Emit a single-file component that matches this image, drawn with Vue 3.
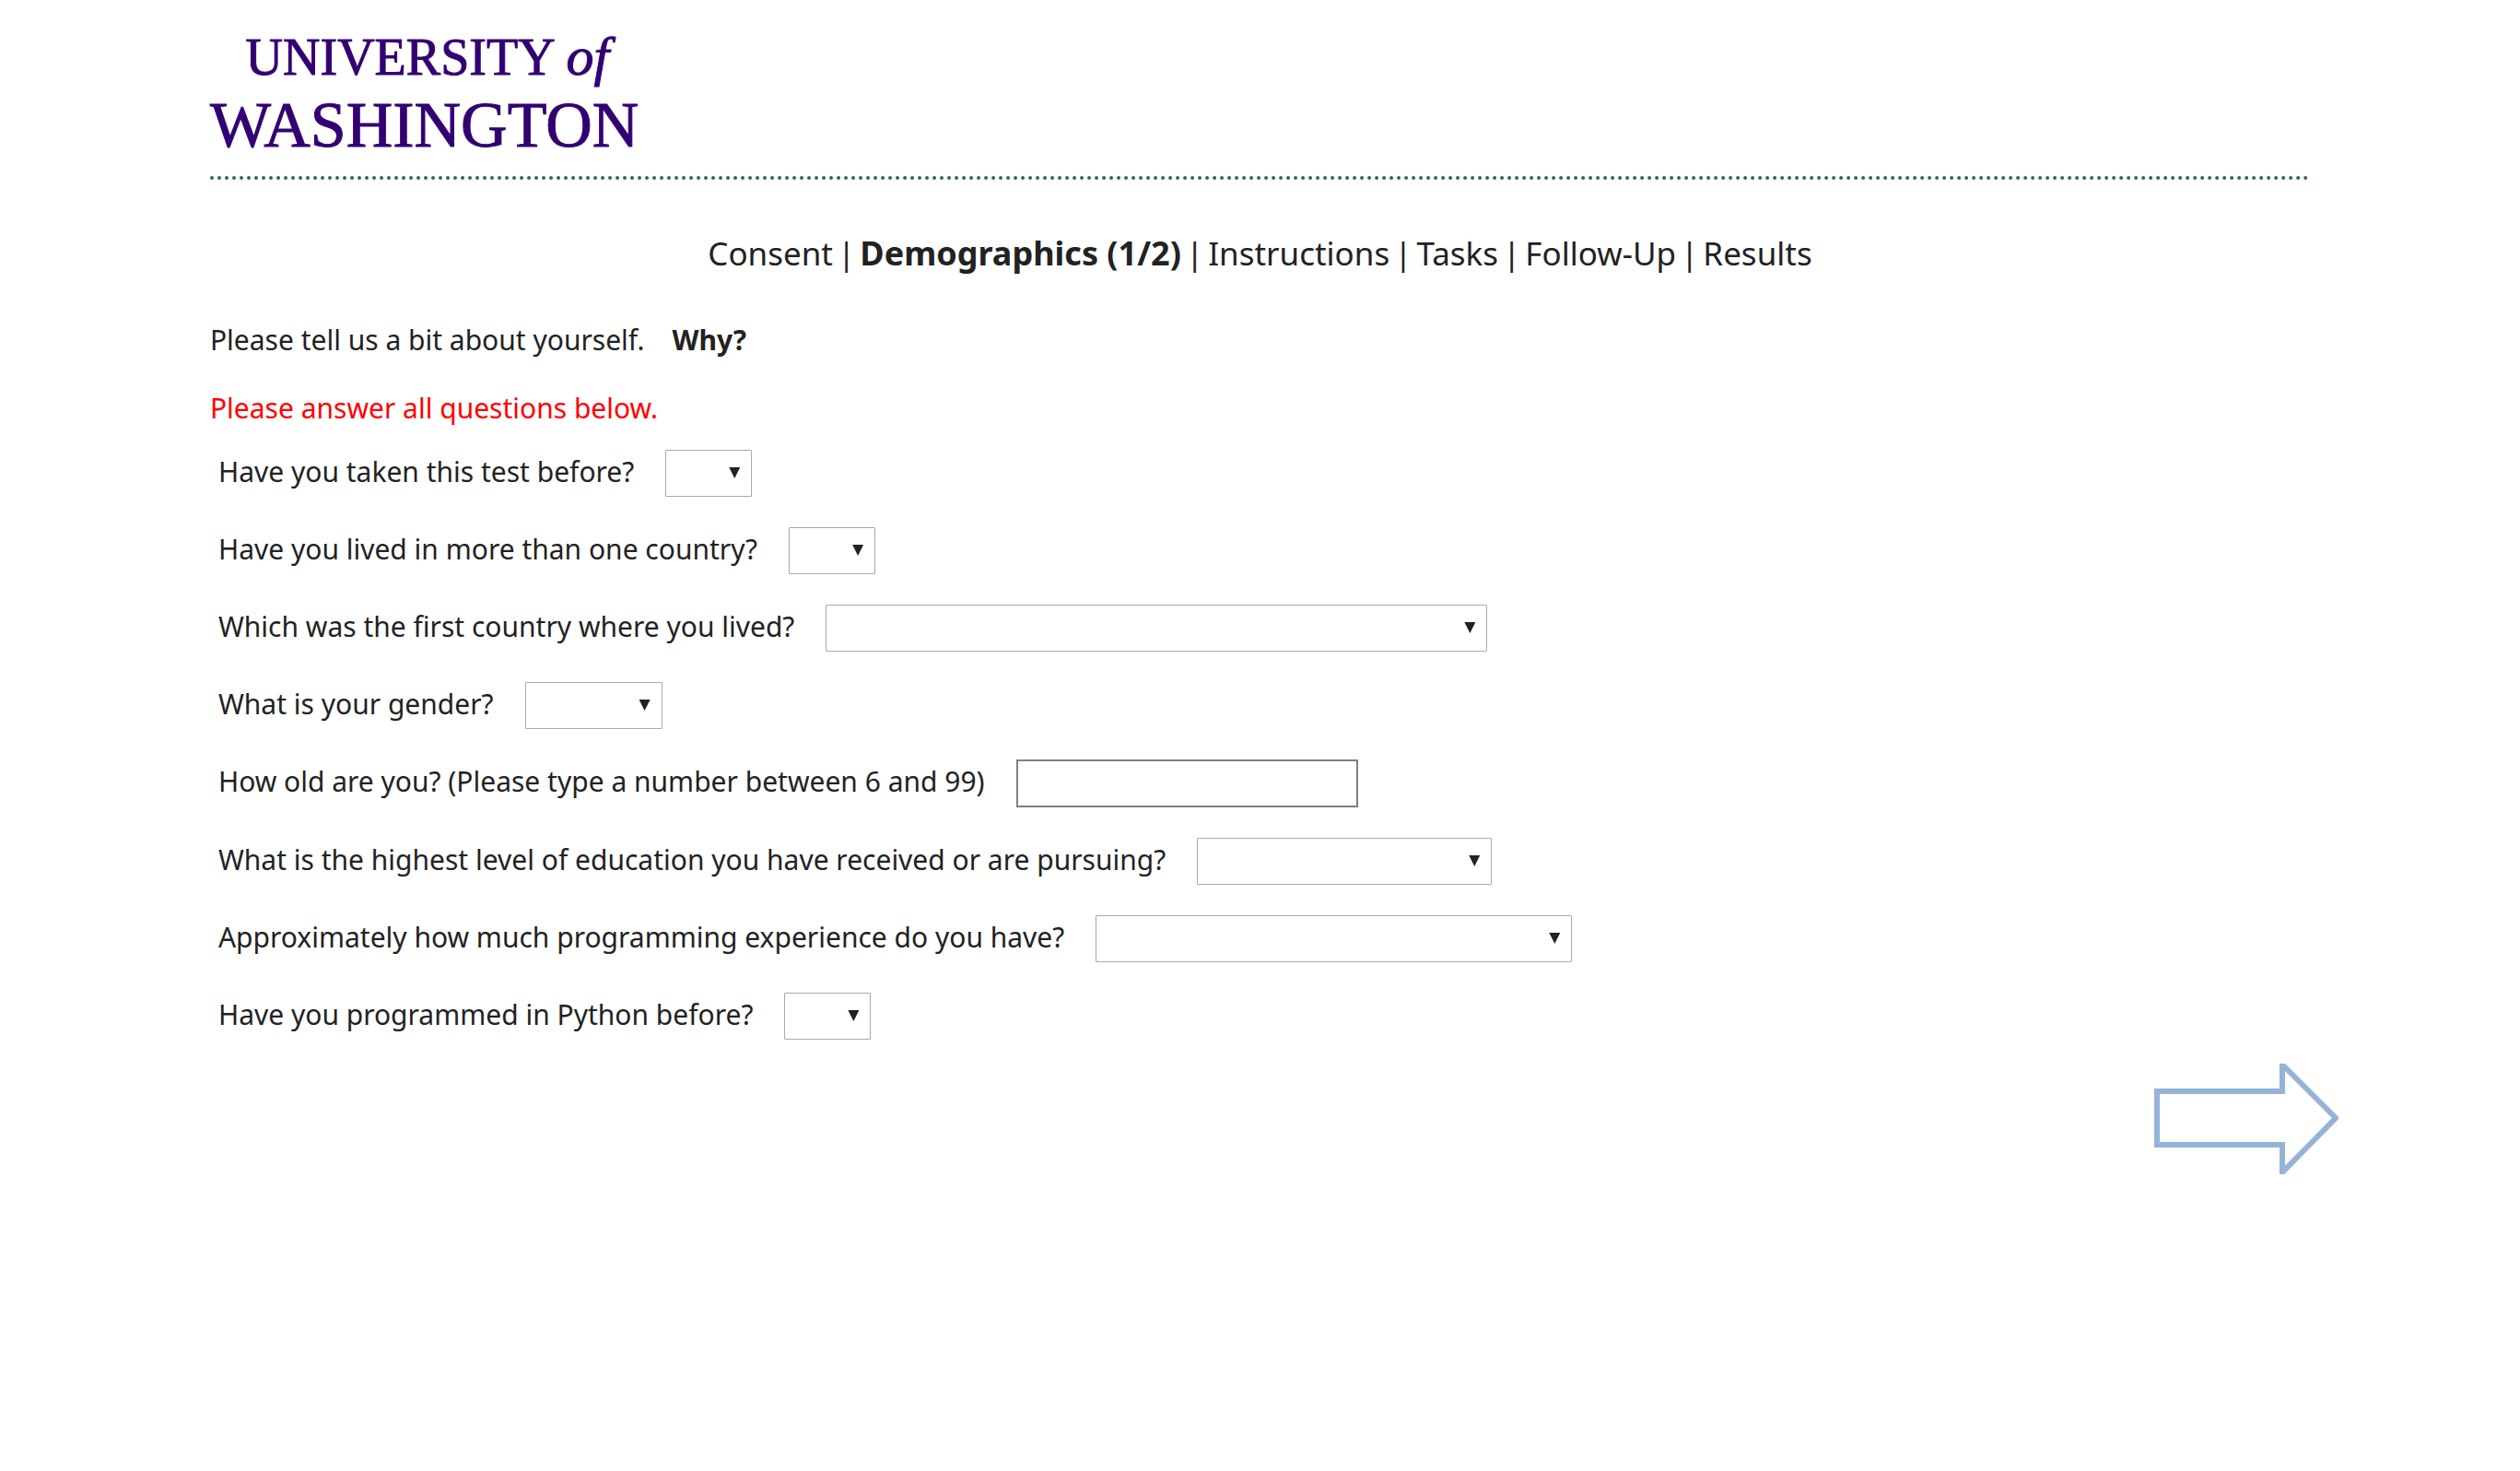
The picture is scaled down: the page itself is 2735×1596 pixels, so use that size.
<script setup>
import { reactive } from 'vue'

const steps = ['Consent', 'Demographics (1/2)', 'Instructions', 'Tasks', 'Follow-Up', 'Results']
const current = 1

const questions = [
  { id: 'taken', label: 'Have you taken this test before?', size: 'short', options: ['Yes', 'No'] },
  { id: 'lived', label: 'Have you lived in more than one country?', size: 'short', options: ['Yes', 'No'] },
  { id: 'country', label: 'Which was the first country where you lived?', size: 'country', options: [] },
  { id: 'gender', label: 'What is your gender?', size: 'gender', options: ['Female', 'Male', 'Other'] },
  { id: 'age', label: 'How old are you? (Please type a number between 6 and 99)', size: 'age' },
  { id: 'education', label: 'What is the highest level of education you have received or are pursuing?', size: 'education', options: [] },
  { id: 'experience', label: 'Approximately how much programming experience do you have?', size: 'experience', options: [] },
  { id: 'python', label: 'Have you programmed in Python before?', size: 'short', options: ['Yes', 'No'] },
]

const answers = reactive(Object.fromEntries(questions.map((q) => [q.id, ''])))
</script>

<template>
  <div class="page">
    <header class="header">
      <div class="logo">
        <div class="logo-top">UNIVERSITY <i>of</i></div>
        <div class="logo-bottom">WASHINGTON</div>
      </div>
    </header>

    <nav class="steps">
      <template v-for="(step, i) in steps" :key="step">
        <span v-if="i > 0">|</span>
        <strong v-if="i === current">{{ step }}</strong>
        <span v-else>{{ step }}</span>
      </template>
    </nav>

    <form @submit.prevent>
      <p class="intro">Please tell us a bit about yourself. <strong class="why">Why?</strong></p>
      <p class="warning">Please answer all questions below.</p>

      <div class="questions">
        <div v-for="q in questions" :key="q.id" class="question">
          <label :for="q.id">{{ q.label }}</label>
          <span v-if="q.options" class="picker" :class="q.size">
            <select :id="q.id" v-model="answers[q.id]">
              <option value=""></option>
              <option v-for="o in q.options" :key="o">{{ o }}</option>
            </select>
          </span>
          <input v-else :id="q.id" v-model="answers[q.id]" type="text" :class="q.size" />
        </div>
      </div>

      <div class="actions">
        <button type="submit" class="next" aria-label="Next">
          <svg viewBox="0 0 200 120" width="200" height="120">
            <path d="M3 30H139V1L197 59L139 118V88H3Z" fill="#fff" stroke="#95b3d7" stroke-width="6" />
          </svg>
        </button>
      </div>
    </form>
  </div>
</template>

<style>
body {
  margin: 0;
  background: #fff;
}
</style>

<style scoped>
.page {
  box-sizing: border-box;
  padding: 24px 8.3333% 0;
  color: #222;
  font-family: "Segoe UI", "Noto Sans", "Open Sans", sans-serif;
  font-size: 30px;
  line-height: 48px;
}
.header {
  padding-bottom: 19px;
  border-bottom: 4px dotted #2f6464;
}
.logo {
  width: 464px;
  color: #330072;
  font-family: "Liberation Serif", serif;
  text-align: center;
  white-space: nowrap;
  -webkit-text-stroke: 1px #330072;
}
.logo-top {
  padding-left: 8px;
  font-size: 56px;
  line-height: 76px;
}
.logo-top i {
  font-size: 60px;
  line-height: 60px;
}
.logo-bottom {
  font-size: 70px;
  line-height: 72px;
}
.steps {
  display: flex;
  flex-wrap: wrap;
  justify-content: center;
  gap: 5px;
  margin-top: 53px;
  font-size: 35px;
  line-height: 54px;
}
.steps strong {
  font-size: 36px;
}
.intro {
  margin: 43px 0 26px;
}
.why {
  margin-left: 22px;
}
.warning {
  margin: 0 0 21px;
  color: #f00;
}
.questions {
  display: flex;
  flex-direction: column;
  gap: 33px;
  padding-left: 9px;
}
.question {
  display: flex;
  align-items: center;
  gap: 34px;
}
label {
  padding-bottom: 4px;
  line-height: 42px;
}
.picker {
  position: relative;
  display: block;
}
.picker::after {
  content: "";
  position: absolute;
  top: 19px;
  right: 13px;
  width: 12px;
  height: 12px;
  background: #222;
  clip-path: polygon(0 0, 100% 0, 50% 100%);
  pointer-events: none;
}
select,
input {
  box-sizing: border-box;
  display: block;
  padding: 0 12px;
  background: #fff;
  color: #222;
  font: inherit;
}
select {
  appearance: none;
  width: 100%;
  height: 51px;
  border: 1px solid #a9a9a9;
  border-radius: 1px;
}
input {
  height: 52px;
  border: 2px solid #808080;
  border-radius: 0;
}
.short { width: 94px; }
.country { width: 718px; }
.gender { width: 149px; }
.age { width: 371px; }
.education { width: 320px; }
.experience { width: 517px; }
.actions {
  display: flex;
  justify-content: flex-end;
  margin: 26px -31px 0 0;
}
.next {
  padding: 0;
  border: 0;
  background: none;
  cursor: pointer;
}
.next svg {
  display: block;
}
</style>
